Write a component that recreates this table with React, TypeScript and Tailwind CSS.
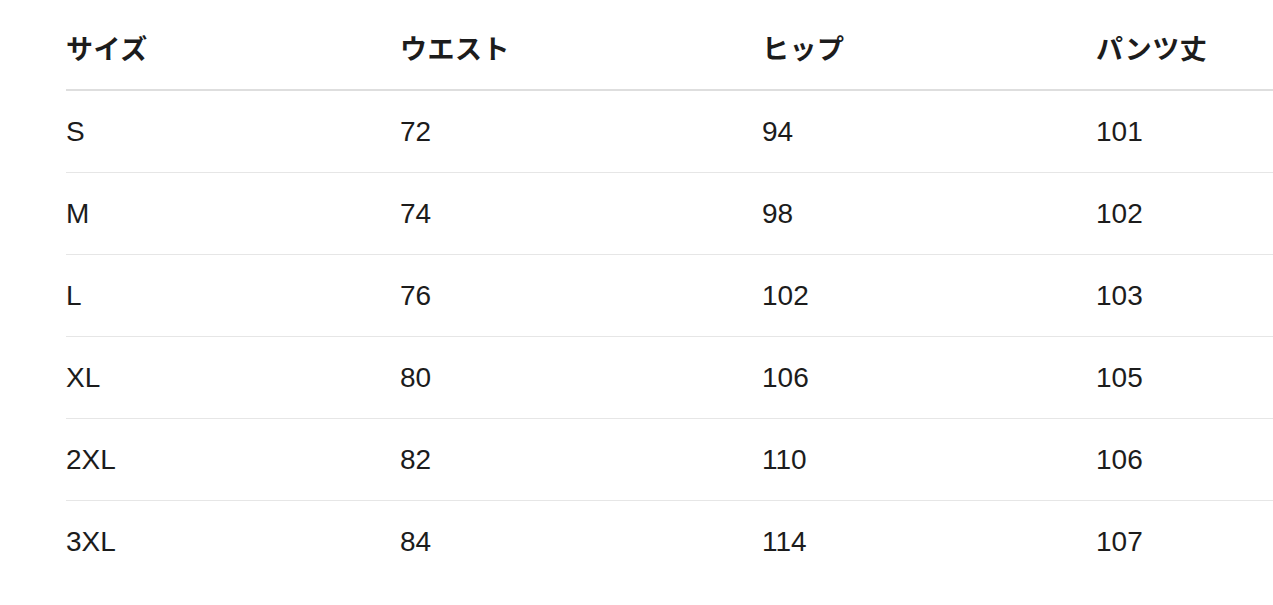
const headers = ["サイズ", "ウエスト", "ヒップ", "パンツ丈"];

const rows = [
  ["S", "72", "94", "101"],
  ["M", "74", "98", "102"],
  ["L", "76", "102", "103"],
  ["XL", "80", "106", "105"],
  ["2XL", "82", "110", "106"],
  ["3XL", "84", "114", "107"],
];

const cols = "grid grid-cols-[334px_362px_334px_1fr]";

export default function App() {
  return (
    <div className="min-h-[605px] bg-white pt-[7px] pl-[66px] text-[#1c1c1c] [font-family:'Liberation_Sans','Noto_Sans_CJK_JP',sans-serif]">
      <div className={`${cols} h-[84px] items-center border-b-2 border-[#dedede]`}>
        {headers.map((h) => (
          <div key={h} className="text-[27px] font-bold tracking-[0.5px] [font-family:'Noto_Sans_CJK_JP',sans-serif]">
            {h}
          </div>
        ))}
      </div>
      {rows.map((r, i) => (
        <div
          key={r[0]}
          className={`${cols} h-[82px] items-center ${i < rows.length - 1 ? "border-b border-[#e6e6e6]" : ""}`}
        >
          {r.map((c, j) => (
            <div key={j} className="text-[28px]">
              {c}
            </div>
          ))}
        </div>
      ))}
    </div>
  );
}
